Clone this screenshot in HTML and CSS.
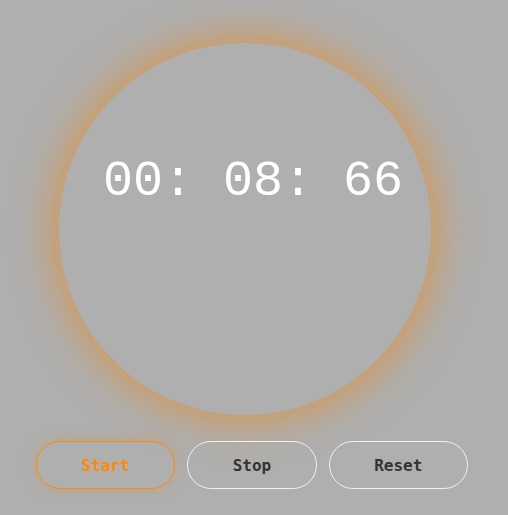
FILE: index.html
```html
<!DOCTYPE html>
<html>
<head>
<meta charset="utf-8">
<link rel="stylesheet" href="styles.css">
</head>
<body>
<div class="app">
  <div class="dial">
    <div class="time">00: 08: 66</div>
  </div>
  <div class="controls">
    <button class="btn btn-start">Start</button>
    <button class="btn">Stop</button>
    <button class="btn">Reset</button>
  </div>
</div>
</body>
</html>
```
FILE: styles.css
```css
html, body {
  margin: 0;
  padding: 0;
  background: #afafaf;
  height: 100%;
}
.app {
  display: flex;
  flex-direction: column;
  padding-top: 43px;
}
.dial {
  width: 372px;
  height: 372px;
  margin-left: 59px;
  border-radius: 50%;
  background: #afafaf;
  box-shadow: 0 0 40px 4px rgba(230, 140, 40, 0.75);
  box-sizing: border-box;
  padding-top: 110px;
  display: flex;
  flex-direction: column;
  align-items: center;
}
.time {
  font-family: "Liberation Mono", "Courier New", monospace;
  font-size: 50px;
  line-height: normal;
  color: #ffffff;
  padding-left: 16px;
  white-space: pre;
}
.controls {
  display: flex;
  gap: 12px;
  margin-top: 26px;
  padding-left: 36px;
}
.btn {
  font-family: "DejaVu Sans Mono", monospace;
  font-weight: bold;
  font-size: 16px;
  color: #333333;
  background: transparent;
  border: 1px solid #f0f0f0;
  border-radius: 24px;
  height: 48px;
  padding: 0 44.5px;
  margin: 0;
}
.btn-start {
  color: #ff8a00;
  border-color: #ff8a00;
  box-shadow: 0 0 14px rgba(230, 140, 40, 0.35);
}
```
